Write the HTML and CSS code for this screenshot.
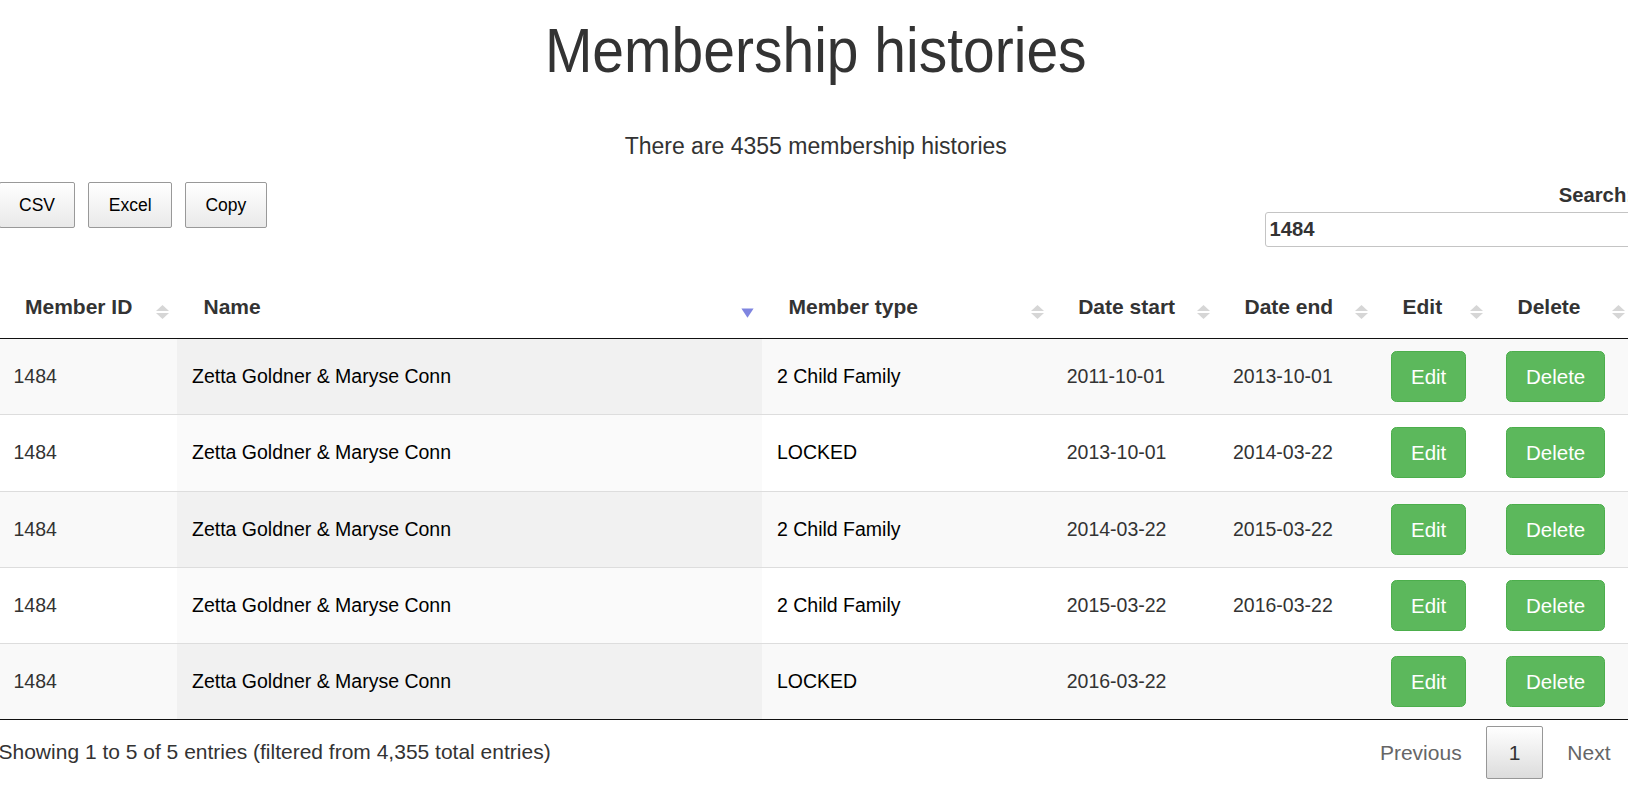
FILE: index.html
```html
<!DOCTYPE html>
<html lang="en">
<head>
<meta charset="utf-8">
<title>Membership histories</title>
<link rel="stylesheet" href="styles.css">
</head>
<body>
<div class="page">
  <h1 class="title">Membership histories</h1>
  <p class="count">There are 4355 membership histories</p>

  <div class="toolbar">
    <div class="export-buttons">
      <button class="dt-button" type="button">CSV</button>
      <button class="dt-button" type="button">Excel</button>
      <button class="dt-button" type="button">Copy</button>
    </div>
    <div class="filter">
      <label class="filter-label" for="search">Search:</label>
      <input class="filter-input" id="search" type="search" value="1484">
    </div>
  </div>

  <table class="data-table">
    <colgroup>
      <col class="c-id">
      <col class="c-name">
      <col class="c-type">
      <col class="c-start">
      <col class="c-end">
      <col class="c-edit">
      <col class="c-delete">
    </colgroup>
    <thead>
      <tr>
        <th>Member ID<svg class="sort-both" viewBox="0 0 13 14"><path d="M6.5 0 L13 6 L0 6 Z"/><path d="M0 8 L13 8 L6.5 14 Z"/></svg></th>
        <th>Name<svg class="sort-desc" viewBox="0 0 13 10"><path d="M0.4 0.4 L12.6 0.4 L6.5 9.8 Z"/></svg></th>
        <th>Member type<svg class="sort-both" viewBox="0 0 13 14"><path d="M6.5 0 L13 6 L0 6 Z"/><path d="M0 8 L13 8 L6.5 14 Z"/></svg></th>
        <th>Date start<svg class="sort-both" viewBox="0 0 13 14"><path d="M6.5 0 L13 6 L0 6 Z"/><path d="M0 8 L13 8 L6.5 14 Z"/></svg></th>
        <th>Date end<svg class="sort-both" viewBox="0 0 13 14"><path d="M6.5 0 L13 6 L0 6 Z"/><path d="M0 8 L13 8 L6.5 14 Z"/></svg></th>
        <th>Edit<svg class="sort-both" viewBox="0 0 13 14"><path d="M6.5 0 L13 6 L0 6 Z"/><path d="M0 8 L13 8 L6.5 14 Z"/></svg></th>
        <th>Delete<svg class="sort-both" viewBox="0 0 13 14"><path d="M6.5 0 L13 6 L0 6 Z"/><path d="M0 8 L13 8 L6.5 14 Z"/></svg></th>
      </tr>
    </thead>
    <tbody>
      <tr class="odd">
        <td class="muted">1484</td>
        <td class="sorted strong">Zetta Goldner &amp; Maryse Conn</td>
        <td class="strong">2 Child Family</td>
        <td class="muted">2011-10-01</td>
        <td class="muted">2013-10-01</td>
        <td><button class="btn-success" type="button">Edit</button></td>
        <td><button class="btn-success" type="button">Delete</button></td>
      </tr>
      <tr class="even">
        <td class="muted">1484</td>
        <td class="sorted strong">Zetta Goldner &amp; Maryse Conn</td>
        <td class="strong">LOCKED</td>
        <td class="muted">2013-10-01</td>
        <td class="muted">2014-03-22</td>
        <td><button class="btn-success" type="button">Edit</button></td>
        <td><button class="btn-success" type="button">Delete</button></td>
      </tr>
      <tr class="odd">
        <td class="muted">1484</td>
        <td class="sorted strong">Zetta Goldner &amp; Maryse Conn</td>
        <td class="strong">2 Child Family</td>
        <td class="muted">2014-03-22</td>
        <td class="muted">2015-03-22</td>
        <td><button class="btn-success" type="button">Edit</button></td>
        <td><button class="btn-success" type="button">Delete</button></td>
      </tr>
      <tr class="even">
        <td class="muted">1484</td>
        <td class="sorted strong">Zetta Goldner &amp; Maryse Conn</td>
        <td class="strong">2 Child Family</td>
        <td class="muted">2015-03-22</td>
        <td class="muted">2016-03-22</td>
        <td><button class="btn-success" type="button">Edit</button></td>
        <td><button class="btn-success" type="button">Delete</button></td>
      </tr>
      <tr class="odd">
        <td class="muted">1484</td>
        <td class="sorted strong">Zetta Goldner &amp; Maryse Conn</td>
        <td class="strong">LOCKED</td>
        <td class="muted">2016-03-22</td>
        <td class="muted"></td>
        <td><button class="btn-success" type="button">Edit</button></td>
        <td><button class="btn-success" type="button">Delete</button></td>
      </tr>
    </tbody>
  </table>

  <div class="table-footer">
    <div class="info">Showing 1 to 5 of 5 entries (filtered from 4,355 total entries)</div>
    <div class="paginate">
      <a class="page-btn disabled">Previous</a>
      <a class="page-btn current">1</a>
      <a class="page-btn disabled">Next</a>
    </div>
  </div>
</div>
</body>
</html>
```

FILE: styles.css
```css
html, body {
  margin: 0;
  padding: 0;
  overflow: hidden;
  background: #fff;
}

body {
  font-family: "Liberation Sans", Arial, sans-serif;
  color: #333;
}

.page {
  width: 1634.5px;
  margin-left: -1.5px;
}

.title {
  margin: 19.5px 0 0;
  font-size: 57px;
  line-height: 65px;
  font-weight: normal;
  text-align: center;
  color: #333;
  transform: scaleY(1.1);
  transform-origin: 50% 52.2px;
}

.count {
  margin: 45px 0 0;
  font-size: 23px;
  line-height: 33px;
  text-align: center;
  color: #333;
}

.toolbar {
  margin-top: 19.2px;
  display: flex;
  justify-content: space-between;
  align-items: flex-start;
}

.export-buttons {
  display: flex;
  gap: 12.8px;
}

.dt-button {
  font-family: "Liberation Sans", Arial, sans-serif;
  font-size: 17.5px;
  line-height: 28px;
  padding: 8px 19.5px;
  color: #000;
  border: 1px solid #999;
  border-radius: 2px;
  background: linear-gradient(to bottom, #ffffff 0%, #e9e9e9 100%);
  cursor: pointer;
}

.filter {
  display: flex;
  flex-direction: column;
  align-items: flex-end;
}

.filter-label {
  font-size: 20.25px;
  line-height: 27px;
  font-weight: bold;
  color: #333;
}

.filter-input {
  margin-top: 3px;
  box-sizing: border-box;
  width: 368px;
  height: 35px;
  padding: 0 2px 0 3.5px;
  border: 1px solid #c4c4c4;
  border-radius: 3px;
  font-family: "Liberation Sans", Arial, sans-serif;
  font-size: 20.25px;
  font-weight: bold;
  color: #333;
  background: #fff;
  outline: none;
}

.data-table {
  margin-top: 39.3px;
  width: 1634.5px;
  table-layout: fixed;
  border-collapse: separate;
  border-spacing: 0;
  border-bottom: 1px solid #111;
}

.c-id { width: 178.5px; }
.c-name { width: 585px; }
.c-type { width: 289.7px; }
.c-start { width: 166.3px; }
.c-end { width: 158px; }
.c-edit { width: 115px; }
.c-delete { width: 142px; }

.data-table th {
  position: relative;
  box-sizing: border-box;
  padding: 5.7px 30px 17.3px 26.5px;
  font-size: 21px;
  line-height: 29px;
  font-weight: bold;
  text-align: left;
  color: #333;
  white-space: nowrap;
  border-bottom: 1px solid #111;
}

.sort-both {
  position: absolute;
  right: 7.6px;
  top: 26px;
  width: 13px;
  height: 14px;
  transform: translateY(-50%);
  fill: #d6d6d6;
}

.sort-desc {
  position: absolute;
  right: 8px;
  top: 22.3px;
  width: 13px;
  height: 10px;
  fill: #7f85e0;
}

.data-table td {
  box-sizing: border-box;
  height: 76.3px;
  padding: 0 14px 0 15px;
  font-size: 19.5px;
  line-height: 27px;
  vertical-align: middle;
  white-space: nowrap;
  border-top: 1px solid #ddd;
}

.data-table tbody tr:first-child td {
  height: 75.3px;
  border-top: none;
}

.data-table tr.odd td { background: #f9f9f9; }
.data-table tr.even td { background: #fff; }
.data-table tr.odd td.sorted { background: #f1f1f1; }
.data-table tr.even td.sorted { background: #fafafa; }

.muted { color: #333; }
.strong { color: #000; }

.btn-success {
  display: inline-block;
  font-family: "Liberation Sans", Arial, sans-serif;
  font-size: 20.5px;
  line-height: 29px;
  padding: 10px 19px;
  color: #fff;
  background: #5cb85c;
  border: 1px solid #4cae4c;
  border-radius: 5.4px;
  cursor: pointer;
  vertical-align: middle;
}

.table-footer {
  display: flex;
  justify-content: space-between;
  align-items: flex-start;
}

.info {
  margin-top: 17px;
  font-size: 21px;
  line-height: 29px;
  color: #333;
}

.paginate {
  margin-top: 5.5px;
  display: flex;
}

.page-btn {
  display: block;
  margin-left: 2px;
  padding: 11px 21.5px;
  font-size: 21px;
  line-height: 29px;
  border: 1px solid transparent;
  border-radius: 2px;
  color: #333;
  text-decoration: none;
}

.page-btn.disabled {
  color: #666;
}

.page-btn.current {
  color: #333;
  border-color: #979797;
  background: linear-gradient(to bottom, #ffffff 0%, #dcdcdc 100%);
}
```
